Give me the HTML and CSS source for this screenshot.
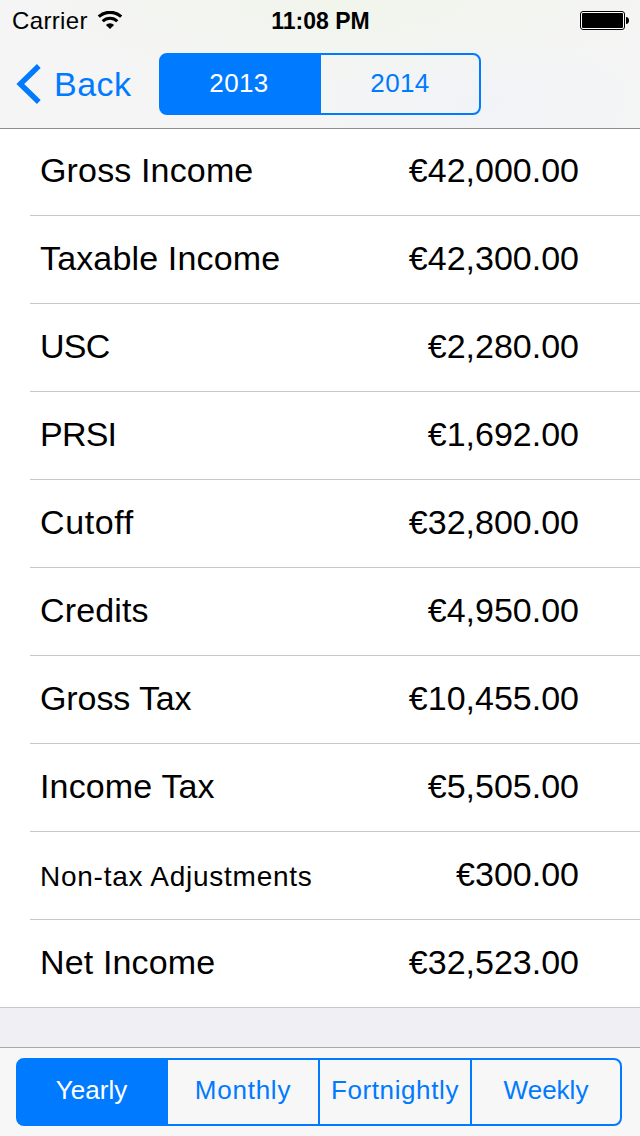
FILE: index.html
```html
<!DOCTYPE html>
<html lang="en">
<head>
  <meta charset="UTF-8" />
  <meta name="viewport" content="width=device-width, initial-scale=1.0" />
  <title>Tax Results</title>
  <link rel="stylesheet" href="styles.css">
</head>
<body>
  <header>
    <!-- Status bar -->
    <div class="status">
      <div class="carrier">
        <span>Carrier</span>
        <svg width="26" height="18" viewBox="0 0 26 18">
          <path d="M1.8 5.7 A16.5 16.5 0 0 1 24.2 5.7" fill="none" stroke="#000" stroke-width="3.2" />
          <path d="M5.7 10.2 A10.4 10.4 0 0 1 20.3 10.2" fill="none" stroke="#000" stroke-width="3" />
          <path d="M13 18 L8.9 14 A5.8 5.8 0 0 1 17.1 14 Z" />
        </svg>
      </div>
      <div class="time">11:08 PM</div>
      <div class="battery">
        <svg width="49" height="19" viewBox="0 0 49 19">
          <rect x="0.5" y="0.5" width="44" height="18" rx="2.5" fill="#fff" stroke="#000" />
          <rect x="2" y="2" width="41" height="15" rx="1" />
          <path d="M46 6 Q49 6.3 49 9.5 Q49 12.7 46 13 Z" />
        </svg>
      </div>
    </div>

    <!-- Nav bar -->
    <div class="nav">
      <a class="back" href="#">
        <svg width="25" height="40" viewBox="0 0 25 40">
          <path d="M22.8 2 L4.3 20 L22.8 38" fill="none" stroke="#007aff" stroke-width="5.4" />
        </svg>
        <span>Back</span>
      </a>
      <div class="segments years">
        <button class="active">2013</button>
        <button>2014</button>
      </div>
    </div>
  </header>

  <ul class="rows">
    <li><span>Gross Income</span><b>€42,000.00</b></li>
    <li><span>Taxable Income</span><b>€42,300.00</b></li>
    <li><span class="caps">USC</span><b>€2,280.00</b></li>
    <li><span class="caps">PRSI</span><b>€1,692.00</b></li>
    <li><span class="wide">Cutoff</span><b>€32,800.00</b></li>
    <li><span>Credits</span><b>€4,950.00</b></li>
    <li><span class="tight">Gross Tax</span><b>€10,455.00</b></li>
    <li><span>Income Tax</span><b>€5,505.00</b></li>
    <li><span class="small">Non-tax Adjustments</span><b>€300.00</b></li>
    <li><span>Net Income</span><b>€32,523.00</b></li>
  </ul>

  <footer>
    <div class="segments periods">
      <button class="active">Yearly</button>
      <button class="monthly">Monthly</button>
      <button class="fortnightly">Fortnightly</button>
      <button>Weekly</button>
    </div>
  </footer>
</body>
</html>
```
FILE: styles.css
```css
:root { --blue: #007aff; }
* { box-sizing:border-box; }
html, body { margin:0; padding:0; height:100%; }
body {
  display:flex;
  flex-direction:column;
  height:100vh;
  background:#efeff4;
  font-family:"Liberation Sans", Arial, sans-serif;
  color:#000;
  overflow:hidden;
}
/* Header */
header {
  flex:none;
  height:129px;
  border-bottom:1px solid #8e8e8e;
  background:
    radial-gradient(ellipse 330px 90px at 55% 0, rgba(240,245,234,0.9), rgba(240,245,234,0) 100%),
    radial-gradient(ellipse 190px 80px at 75% 80%, rgba(240,243,247,0.9), rgba(240,243,247,0) 100%),
    #f5f5f5;
}
.status {
  display:grid;
  grid-template-columns:1fr auto 1fr;
  align-items:center;
  height:40px;
  padding:0 11px 0 12px;
  font-size:24px;
}
.carrier { display:flex; align-items:center; gap:9px; }
.carrier span { padding-top:1px; letter-spacing:0.35px; }
.time { padding-top:2px; font-size:23px; font-weight:bold; }
.battery { display:flex; justify-content:flex-end; }
.nav {
  display:flex;
  align-items:flex-start;
  height:88px;
  padding-top:13px;
}
.back {
  display:flex;
  align-items:center;
  gap:13px;
  width:159px;
  height:62px;
  padding-left:16px;
  font-size:34px;
  letter-spacing:0.5px;
  color:var(--blue);
  text-decoration:none;
}
/* Segmented controls */
.segments {
  display:grid;
  border:2px solid var(--blue);
  border-radius:8px;
  background:linear-gradient(var(--blue), var(--blue)) left / 20px 100% no-repeat;
  overflow:hidden;
}
.segments button {
  padding:0 0 3px;
  border:none;
  border-left:2px solid var(--blue);
  background:none;
  font:26px "Liberation Sans", Arial, sans-serif;
  color:var(--blue);
}
.segments .active { background:var(--blue); color:#fff; }
.segments .active, .segments .active + button { border-left:none; }
.years {
  grid-template-columns:160px 158px;
  width:322px;
  height:62px;
}
.years button { padding-bottom:1px; letter-spacing:0.4px; }
.years .active { padding-right:4px; }
/* Amounts */
.rows {
  flex:none;
  margin:0;
  padding:0;
  list-style:none;
  background:#fff;
  border-bottom:1px solid #c8c7cc;
}
.rows li {
  display:flex;
  align-items:center;
  justify-content:space-between;
  height:88px;
  margin-left:30px;
  padding:0 61px 3px 10px;
  border-bottom:1px solid #c8c7cc;
  font-size:34px;
}
.rows li:first-child { height:87px; }
.rows li:last-child { height:87px; border-bottom:none; }
.rows span { letter-spacing:0.15px; }
.rows b { font-weight:normal; }
.rows .caps { letter-spacing:-0.8px; }
.rows .tight { letter-spacing:-0.1px; }
.rows .wide { letter-spacing:0.6px; }
.rows .small { padding-top:5px; font-size:28px; letter-spacing:0.75px; }
/* Bottom bar */
footer {
  height:89px;
  margin-top:auto;
  padding:10px 18px 0 16px;
  border-top:1px solid #a7a7aa;
  background:#f7f7f7;
}
.periods {
  grid-template-columns:150px 150px 152px 150px;
  height:68px;
}
.periods .active { padding-right:3px; }
.periods .monthly { letter-spacing:0.75px; }
.periods .fortnightly { letter-spacing:0.6px; }
```
